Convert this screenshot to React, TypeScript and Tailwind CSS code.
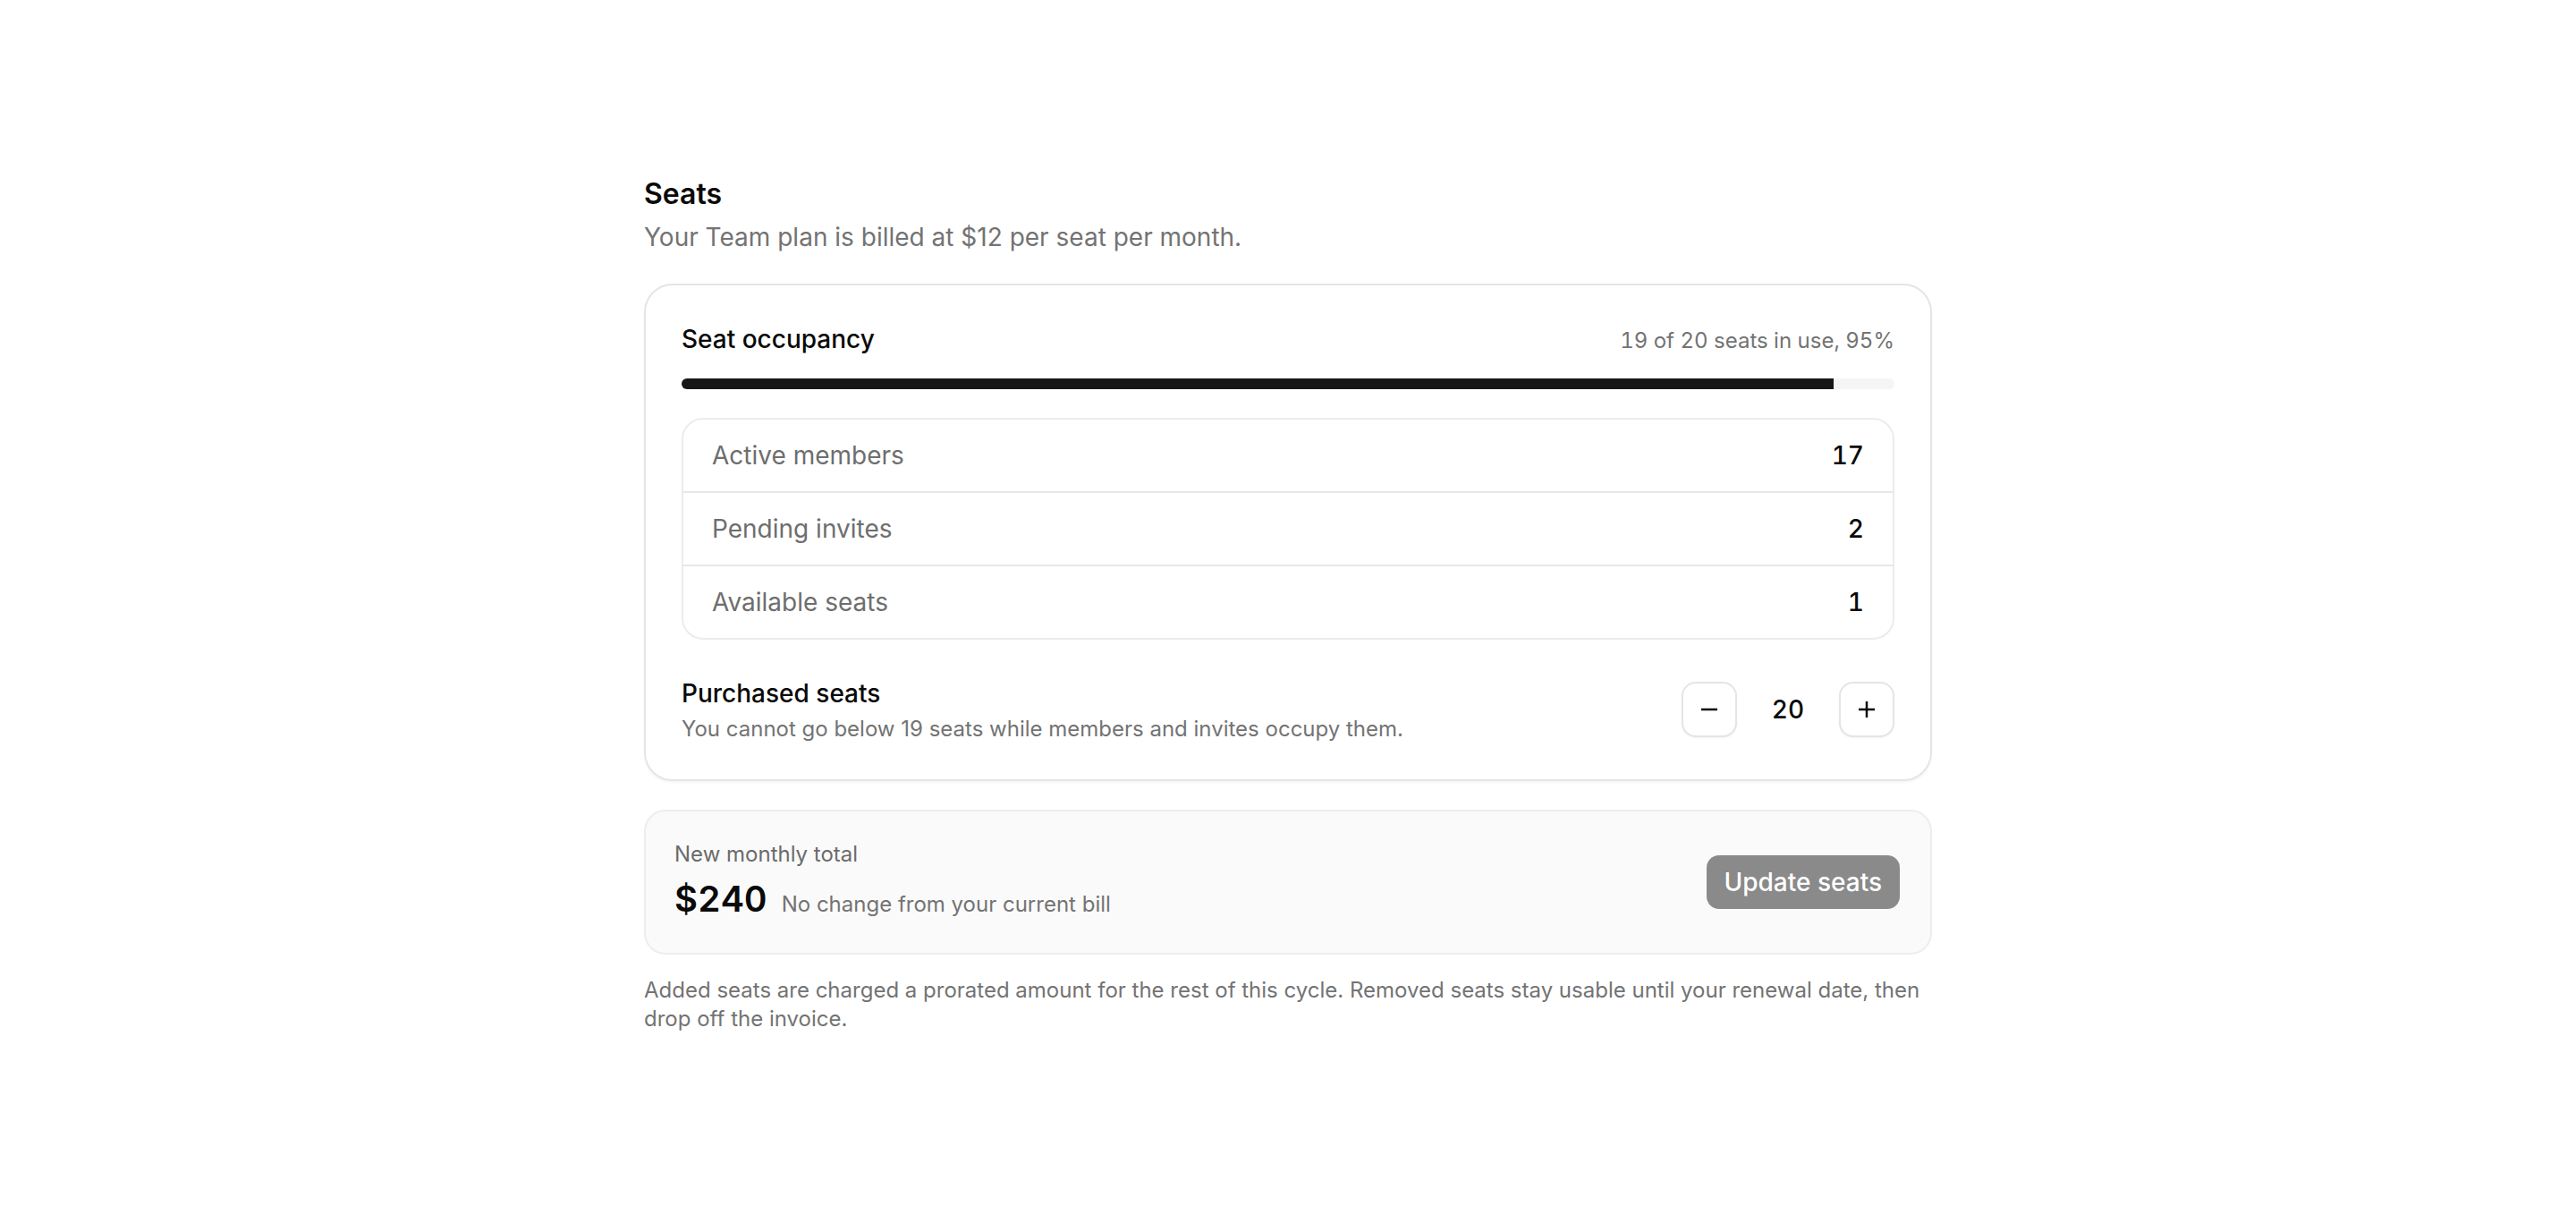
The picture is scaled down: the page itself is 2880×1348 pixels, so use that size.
import React, { useState } from 'react';

const PRICE_PER_SEAT = 12;
const CURRENT_SEATS = 20;

const usage = [
  { label: 'Active members', value: 17 },
  { label: 'Pending invites', value: 2 },
  { label: 'Available seats', value: 1 },
];

const StepIcon: React.FC<{ plus?: boolean }> = ({ plus }) => (
  <svg width="20" height="20" viewBox="0 0 20 20" fill="none" stroke="#0a0a0a" strokeWidth="2.5">
    <path d="M1 10h18" />
    {plus && <path d="M10 1v18" />}
  </svg>
);

export default function App() {
  const [seats, setSeats] = useState(CURRENT_SEATS);
  const used = 19;
  const percent = Math.round((used / seats) * 100);
  const total = seats * PRICE_PER_SEAT;
  const unchanged = seats === CURRENT_SEATS;

  return (
    <div className="min-h-screen flex items-center justify-center bg-white font-['Inter',sans-serif] text-[#0a0a0a]">
      <div className="w-[1440px]">
        {/* Heading */}
        <h2 className="text-[32px] leading-[48px] font-semibold">Seats</h2>
        <p className="mt-1 text-[28px] leading-[40px] text-[#737373]">
          Your Team plan is billed at ${PRICE_PER_SEAT} per seat per month.
        </p>

        {/* Occupancy card */}
        <div className="mt-8 rounded-[32px] border-2 border-[#e5e5e5] bg-white p-10 shadow-[0_2px_3px_rgba(0,0,0,0.04)]">
          <div className="flex items-baseline justify-between">
            <span className="text-[28px] leading-[40px] font-medium">Seat occupancy</span>
            <span className="text-[24px] leading-[32px] text-[#737373] tabular-nums">
              {used} of {seats} seats in use, {percent}%
            </span>
          </div>

          <div className="mt-6 h-3 rounded-full bg-[#f5f5f5] overflow-hidden">
            <div className="h-full bg-[#171717]" style={{ width: `${Math.min(percent, 100)}%` }} />
          </div>

          <div className="mt-8 rounded-[24px] border-2 border-[#ececec] divide-y-2 divide-[#e8e8e8]">
            {usage.map((row) => (
              <div key={row.label} className="flex items-center justify-between px-8 py-5 text-[28px] leading-[40px]">
                <span className="text-[#6e6e6e]">{row.label}</span>
                <span className="font-medium tabular-nums">{row.value}</span>
              </div>
            ))}
          </div>

          <div className="mt-10 flex items-center justify-between">
            <div>
              <div className="text-[28px] leading-[40px] font-medium">Purchased seats</div>
              <div className="mt-1 text-[24px] leading-[32px] text-[#737373]">
                You cannot go below {used} seats while members and invites occupy them.
              </div>
            </div>
            <div className="flex items-center gap-4">
              <button
                onClick={() => setSeats((s) => Math.max(used, s - 1))}
                className="w-[62px] h-[62px] flex items-center justify-center rounded-2xl border-2 border-[#e5e5e5] bg-white shadow-[0_1px_2px_rgba(0,0,0,0.05)]"
              >
                <StepIcon />
              </button>
              <span className="w-[82px] text-center text-[28px] leading-[40px] font-medium tabular-nums">{seats}</span>
              <button
                onClick={() => setSeats((s) => s + 1)}
                className="w-[62px] h-[62px] flex items-center justify-center rounded-2xl border-2 border-[#e5e5e5] bg-white shadow-[0_1px_2px_rgba(0,0,0,0.05)]"
              >
                <StepIcon plus />
              </button>
            </div>
          </div>
        </div>

        {/* Summary */}
        <div className="mt-8 flex items-center justify-between rounded-[24px] border-2 border-[#ededed] bg-[#fafafa] pl-8 pr-[34px] py-8">
          <div>
            <div className="text-[24px] leading-[32px] text-[#6b6b6b]">New monthly total</div>
            <div className="mt-[6px] flex items-baseline gap-4">
              <span className="text-[40px] leading-[56px] font-semibold tabular-nums">${total}</span>
              <span className="text-[24px] leading-[32px] text-[#737373]">
                {unchanged ? 'No change from your current bill' : `Was $${CURRENT_SEATS * PRICE_PER_SEAT} per month`}
              </span>
            </div>
          </div>
          <button
            disabled={unchanged}
            className="h-[60px] px-5 rounded-[14px] bg-[#8a8a8a] text-white text-[28px] font-medium"
          >
            Update seats
          </button>
        </div>

        <p className="mt-6 text-[24px] leading-[32px] text-[#737373]">
          Added seats are charged a prorated amount for the rest of this cycle. Removed seats stay usable until your
          renewal date, then drop off the invoice.
        </p>
      </div>
    </div>
  );
}
